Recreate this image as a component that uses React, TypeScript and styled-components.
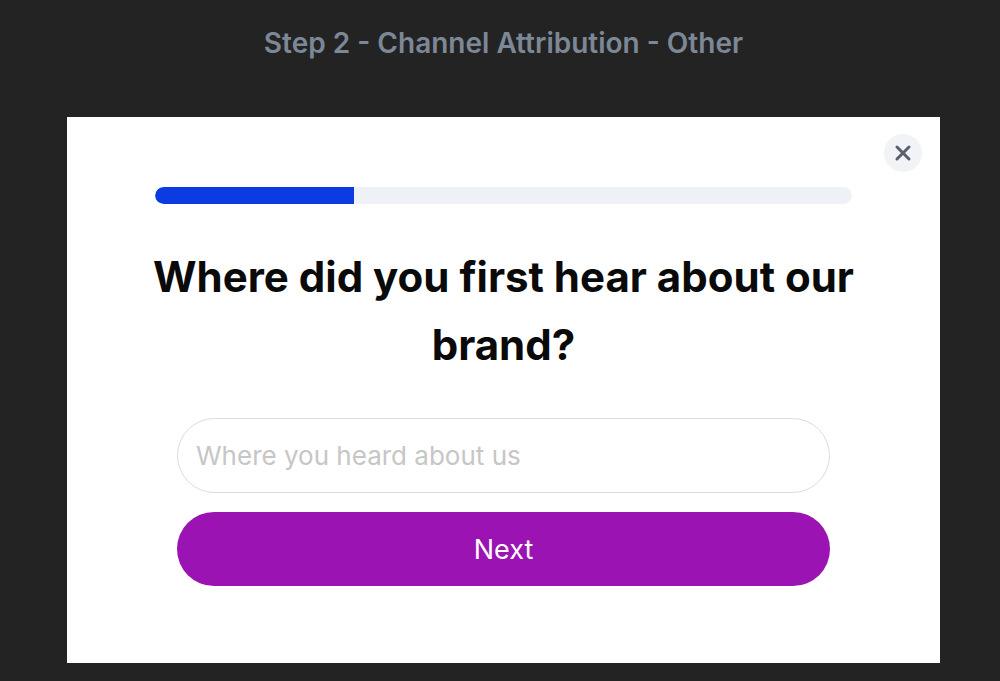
import React from "react";
import styled, { createGlobalStyle } from "styled-components";

const GlobalStyle = createGlobalStyle`
  html, body {
    margin: 0;
    padding: 0;
    background: #232323;
    font-family: Inter, "Noto Sans", "Liberation Sans", sans-serif;
  }
  * { box-sizing: border-box; }
`;

const Page = styled.div`
  width: 1000px;
  height: 681px;
  overflow: hidden;
  display: flex;
  flex-direction: column;
`;

const StepTitle = styled.h1`
  margin: 26px 0 0 7px;
  height: 34px;
  line-height: 34px;
  text-align: center;
  font-size: 28px;
  font-weight: 600;
  color: #7c8896;
`;

const Modal = styled.div`
  position: relative;
  margin: 57px 0 0 67px;
  width: 873px;
  height: 546px;
  background: #ffffff;
  padding: 70px 88px 0;
  display: flex;
  flex-direction: column;
  align-items: center;
`;

const CloseButton = styled.button`
  position: absolute;
  top: 17px;
  right: 18px;
  width: 38px;
  height: 38px;
  border-radius: 50%;
  border: none;
  background: #f1f3f7;
  display: flex;
  align-items: center;
  justify-content: center;
  padding: 0;
  cursor: pointer;
`;

const Track = styled.div`
  width: 100%;
  height: 17px;
  border-radius: 9px;
  background: #eef1f5;
  overflow: hidden;
`;

const Fill = styled.div`
  height: 100%;
  background: #0b3ce2;
  border-radius: 9px 0 0 9px;
`;

const Question = styled.h2`
  margin: 39px -20px 0;
  width: calc(100% + 40px);
  text-align: center;
  font-size: 42px;
  line-height: 68px;
  font-weight: 700;
  color: #0a0a0a;
`;

const Form = styled.div`
  margin-top: 39px;
  width: 653px;
  display: flex;
  flex-direction: column;
  gap: 19px;
`;

const TextInput = styled.input`
  width: 100%;
  height: 75px;
  border-radius: 38px;
  border: 1.5px solid #dcdcdc;
  padding: 0 18px;
  font-family: inherit;
  font-size: 26px;
  color: #222;
  outline: none;

  &::placeholder {
    color: #c6c6c6;
  }
`;

const NextButton = styled.button`
  width: 100%;
  height: 74px;
  border-radius: 37px;
  border: none;
  background: #9c13b3;
  color: #ffffff;
  font-family: inherit;
  font-size: 27px;
  font-weight: 400;
  cursor: pointer;
`;

const CloseIcon = () => (
  <svg width="18" height="18" viewBox="0 0 18 18" fill="none">
    <path d="M3 3L15 15M15 3L3 15" stroke="#59606d" strokeWidth="3" strokeLinecap="round" />
  </svg>
);

const App: React.FC = () => {
  const progress = 28.5;

  return (
    <Page>
      <GlobalStyle />
      <StepTitle>Step 2 - Channel Attribution - Other</StepTitle>
      <Modal>
        <CloseButton aria-label="Close"><CloseIcon /></CloseButton>
        <Track>
          <Fill style={{ width: `${progress}%` }} />
        </Track>
        <Question>Where did you first hear about our brand?</Question>
        <Form>
          <TextInput placeholder="Where you heard about us" />
          <NextButton>Next</NextButton>
        </Form>
      </Modal>
    </Page>
  );
};

export default App;
